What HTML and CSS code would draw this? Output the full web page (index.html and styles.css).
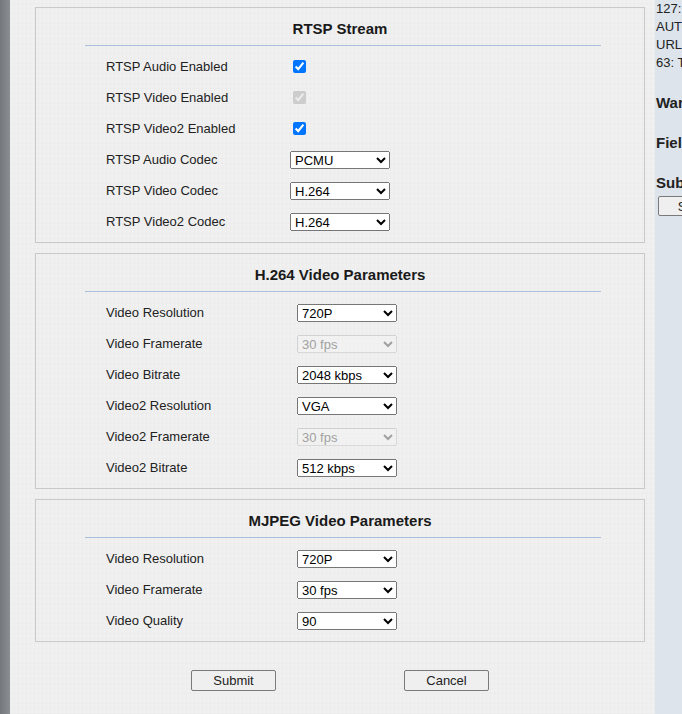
FILE: index.html
```html
<!DOCTYPE html>
<html lang="en">
<head>
    <meta charset="UTF-8">
    <meta name="viewport" content="width=device-width, initial-scale=1.0">
    <title>RTSP Settings</title>
    <link rel="stylesheet" href="styles.css">
</head>
<body>
    <div class="page">
        <div class="edge"></div>

        <div class="main">
            <div class="section">
                <div class="section-title">RTSP Stream</div>
                <div class="section-line"></div>
                <div class="rows">
                    <div class="row">
                        <span class="label">RTSP Audio Enabled</span>
                        <input type="checkbox" checked>
                    </div>
                    <div class="row">
                        <span class="label">RTSP Video Enabled</span>
                        <input type="checkbox" checked disabled>
                    </div>
                    <div class="row">
                        <span class="label">RTSP Video2 Enabled</span>
                        <input type="checkbox" checked>
                    </div>
                    <div class="row">
                        <span class="label">RTSP Audio Codec</span>
                        <select><option>PCMU</option><option>PCMA</option></select>
                    </div>
                    <div class="row">
                        <span class="label">RTSP Video Codec</span>
                        <select><option>H.264</option><option>MJPEG</option></select>
                    </div>
                    <div class="row">
                        <span class="label">RTSP Video2 Codec</span>
                        <select><option>H.264</option><option>MJPEG</option></select>
                    </div>
                </div>
            </div>

            <div class="section wide">
                <div class="section-title">H.264 Video Parameters</div>
                <div class="section-line"></div>
                <div class="rows">
                    <div class="row">
                        <span class="label">Video Resolution</span>
                        <select><option>720P</option><option>1080P</option></select>
                    </div>
                    <div class="row">
                        <span class="label">Video Framerate</span>
                        <select disabled><option>30 fps</option></select>
                    </div>
                    <div class="row">
                        <span class="label">Video Bitrate</span>
                        <select><option>2048 kbps</option><option>1024 kbps</option></select>
                    </div>
                    <div class="row">
                        <span class="label">Video2 Resolution</span>
                        <select><option>VGA</option><option>QVGA</option></select>
                    </div>
                    <div class="row">
                        <span class="label">Video2 Framerate</span>
                        <select disabled><option>30 fps</option></select>
                    </div>
                    <div class="row">
                        <span class="label">Video2 Bitrate</span>
                        <select><option>512 kbps</option><option>256 kbps</option></select>
                    </div>
                </div>
            </div>

            <div class="section wide">
                <div class="section-title">MJPEG Video Parameters</div>
                <div class="section-line"></div>
                <div class="rows">
                    <div class="row">
                        <span class="label">Video Resolution</span>
                        <select><option>720P</option><option>1080P</option></select>
                    </div>
                    <div class="row">
                        <span class="label">Video Framerate</span>
                        <select><option>30 fps</option><option>15 fps</option></select>
                    </div>
                    <div class="row">
                        <span class="label">Video Quality</span>
                        <select><option>90</option><option>80</option></select>
                    </div>
                </div>
            </div>

            <div class="actions">
                <button type="submit">Submit</button>
                <button type="button">Cancel</button>
            </div>
        </div>

        <div class="side">
            <div class="side-log">
                <div>127: Unknown error</div>
                <div>AUTO</div>
                <div>URL</div>
                <div>63: Timeout</div>
            </div>
            <div class="side-head">Warnings</div>
            <div class="side-head">Fields</div>
            <div class="side-head">Submit</div>
            <button type="button" class="side-btn">Submit</button>
        </div>
    </div>
</body>
</html>
```

FILE: styles.css
```css
body {
    margin: 0;
    font-family: Arial, "Liberation Sans", sans-serif;
    font-size: 13px;
    color: #222;
    height: 100vh;
    overflow: hidden;
}

.page {
    display: flex;
    height: 100%;
}

.edge {
    width: 10px;
    flex-shrink: 0;
    background: linear-gradient(to right, #74777c, #8b8e92);
}

.main {
    width: 645px;
    flex-shrink: 0;
    padding-top: 7px;
    background-color: #f0f0f0;
    background-image:
        repeating-linear-gradient(90deg, rgba(0, 0, 0, 0.012) 0 1px, transparent 1px 4px),
        repeating-linear-gradient(0deg, rgba(0, 0, 0, 0.012) 0 1px, transparent 1px 5px);
    box-sizing: border-box;
}

.section {
    margin-left: 25px;
    width: 610px;
    box-sizing: border-box;
    border: 1px solid #c9c9c9;
    padding-bottom: 5px;
    margin-bottom: 10px;
}

.section-title {
    padding-top: 12px;
    height: 18px;
    line-height: 18px;
    text-align: center;
    font-size: 15px;
    font-weight: bold;
    color: #1a1a1a;
}

.section-line {
    margin: 7px 43px 0 49px;
    height: 1px;
    background-color: #a9bfdc;
}

.rows {
    margin-top: 5px;
    padding-left: 70px;
}

.row {
    display: flex;
    align-items: center;
    height: 31px;
}

.label {
    width: 184px;
    flex-shrink: 0;
}

.wide .label {
    width: 191px;
}

input[type="checkbox"] {
    width: 13px;
    height: 13px;
    margin: 0 0 0 3px;
}

select {
    width: 100px;
    height: 18px;
    font-family: Arial, "Liberation Sans", sans-serif;
    font-size: 13px;
    margin: 0;
}

.actions {
    display: flex;
    justify-content: center;
    gap: 128px;
    margin-left: 25px;
    width: 610px;
    margin-top: 28px;
}

button {
    width: 85px;
    height: 21px;
    font-family: Arial, "Liberation Sans", sans-serif;
    font-size: 13px;
    color: #222;
    background-color: #efefef;
    border: 1px solid #7a7a7a;
    border-radius: 2px;
    padding: 0;
}

.side {
    flex-grow: 1;
    background-color: #dde4eb;
    padding-left: 1px;
    white-space: nowrap;
    overflow: hidden;
}

.side-log {
    margin-top: 0;
    line-height: 18px;
}

.side-head {
    font-size: 15px;
    font-weight: bold;
    margin-top: 22px;
    line-height: 18px;
}

.side-head:first-of-type {
    margin-top: 24px;
}

.side-btn {
    margin: 4px 0 0 2px;
    width: 80px;
    height: 20px;
    text-align: center;
}
```
